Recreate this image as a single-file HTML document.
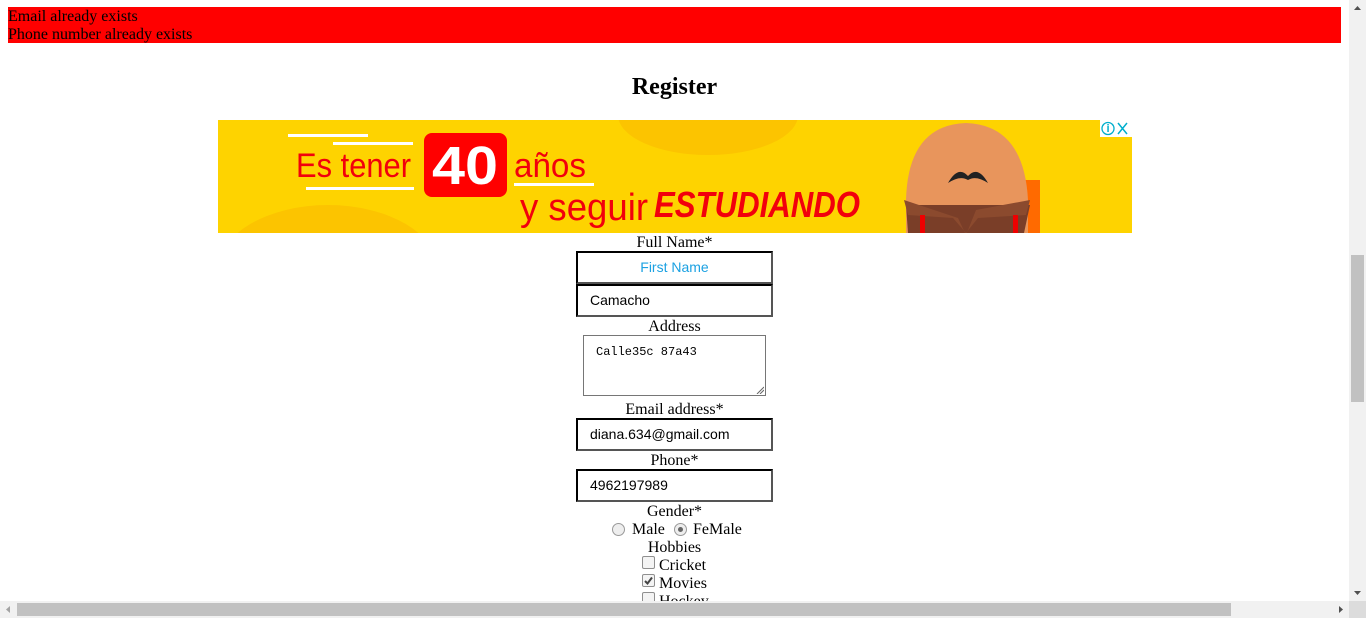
<!DOCTYPE html>
<html><head><meta charset="utf-8">
<style>
html,body{margin:0;padding:0;width:1366px;height:618px;overflow:hidden;background:#fff;font-family:"Liberation Serif",serif;font-size:16px;color:#000;}
.a{position:absolute;}
.lbl{position:absolute;left:0;width:1349px;text-align:center;line-height:18px;}
.inp{position:absolute;left:576px;width:197px;height:33px;border:2px solid;border-color:#000 #555 #555 #000;font-family:"Liberation Sans",sans-serif;font-size:14px;line-height:29px;padding-left:12px;box-sizing:border-box;}
.cb{position:absolute;width:11px;height:11px;border:1px solid #8f8f8f;border-radius:2px;background:#f4f4f4;}
.rd{position:absolute;width:11px;height:11px;border:1px solid #999;border-radius:50%;background:#eee;}
</style></head><body>
<div class="a" style="left:8px;top:7px;width:1333px;height:36px;background:#f00;"><div style="position:absolute;top:1px;line-height:18px;">Email already exists<br>Phone number already exists</div></div>
<div class="lbl" style="top:73px;font-size:24px;font-weight:bold;line-height:28px;">Register</div>

<svg class="a" style="left:218px;top:120px" width="914" height="113" viewBox="0 0 914 113">
<rect width="914" height="113" fill="#fed300"/>
<ellipse cx="490" cy="-5" rx="90" ry="40" fill="#fcc400"/>
<ellipse cx="110" cy="150" rx="110" ry="65" fill="#fcc400"/>
<rect x="70" y="14" width="80" height="3" fill="#fff"/>
<rect x="115" y="22" width="80" height="3" fill="#fff"/>
<rect x="88" y="67" width="108" height="3" fill="#fff"/>
<rect x="296" y="63" width="80" height="3" fill="#fff"/>
<text x="78" y="57" font-family="Liberation Sans,sans-serif" font-size="34" fill="#f2000c" textLength="115" lengthAdjust="spacingAndGlyphs" transform="translate(0,0)">Es tener</text>
<rect x="206" y="13" width="83" height="64" rx="8" fill="#f00"/>
<text x="214" y="64" font-family="Liberation Sans,sans-serif" font-weight="bold" font-size="54" fill="#fff" textLength="66" lengthAdjust="spacingAndGlyphs">40</text>
<text x="296" y="57" font-family="Liberation Sans,sans-serif" font-size="34" fill="#f2000c" textLength="72" lengthAdjust="spacingAndGlyphs">años</text>
<text x="302" y="100" font-family="Liberation Sans,sans-serif" font-size="38" fill="#f2000c" textLength="128" lengthAdjust="spacingAndGlyphs">y seguir</text>
<text x="436" y="97" font-family="Liberation Sans,sans-serif" font-weight="bold" font-style="italic" font-size="36" fill="#f2000c" textLength="206" lengthAdjust="spacingAndGlyphs">ESTUDIANDO</text>
<rect x="800" y="60" width="22" height="53" fill="#ff6a00"/>
<path d="M688 113 L688 80 Q690 5 748 3 Q806 5 810 80 L810 113Z" fill="#e8955c"/>
<path d="M688 85 L812 85 L806 113 L690 113Z" fill="#7a3e28"/>
<path d="M686 80 L740 98 L748 115 L758 90 L812 80 L808 95 L760 98 L748 113 L735 98 L690 95Z" fill="#8b4a2e"/>
<rect x="702" y="95" width="5" height="18" fill="#e00"/>
<rect x="795" y="95" width="5" height="18" fill="#e00"/>
<path d="M730 63 Q740 45 750 56 Q760 45 770 63 Q758 55 750 60 Q742 55 730 63Z" fill="#222"/>
<rect x="882" y="0" width="32" height="17" fill="#fff"/>
<circle cx="890" cy="8.5" r="6" fill="none" stroke="#00aecd" stroke-width="1.3"/>
<rect x="889.3" y="6" width="1.5" height="6" fill="#00aecd"/><rect x="889.3" y="4" width="1.5" height="1.5" fill="#00aecd"/>
<path d="M900 3 L909 14 M909 3 L900 14" stroke="#00aecd" stroke-width="1.5"/>
</svg>

<div class="lbl" style="top:234px;">Full Name*</div>
<div class="inp" style="top:251px;color:#1ba1e2;text-align:center;padding-left:0;">First Name</div>
<div class="inp" style="top:284px;">Camacho</div>
<div class="lbl" style="top:318px;">Address</div>
<div class="a" style="left:583px;top:335px;width:181px;height:59px;border:1px solid #767676;font-family:'Liberation Mono','DejaVu Sans Mono',monospace;font-size:12px;padding:0;"><div style="position:absolute;left:12px;top:9px;">Calle35c 87a43</div>
<svg class="a" style="right:1px;bottom:1px" width="8" height="8"><path d="M1 8 L8 1 M4 8 L8 4" stroke="#666" stroke-width="1"/></svg></div>
<div class="lbl" style="top:401px;">Email address*</div>
<div class="inp" style="top:418px;">diana.634@gmail.com</div>
<div class="lbl" style="top:452px;">Phone*</div>
<div class="inp" style="top:469px;">4962197989</div>
<div class="lbl" style="top:503px;">Gender*</div>
<div class="rd" style="left:612px;top:523px;"></div>
<div class="a" style="left:632px;top:521px;line-height:18px;">Male</div>
<div class="rd" style="left:674px;top:523px;"><div style="position:absolute;left:3px;top:3px;width:5px;height:5px;border-radius:50%;background:#666;"></div></div>
<div class="a" style="left:693px;top:521px;line-height:18px;">FeMale</div>
<div class="lbl" style="top:539px;">Hobbies</div>
<div class="cb" style="left:642px;top:556px;"></div>
<div class="a" style="left:659px;top:557px;line-height:18px;">Cricket</div>
<div class="cb" style="left:642px;top:574px;"><svg class="a" style="left:1px;top:1px" width="9" height="9"><path d="M1 5 L3.5 7.5 L8 1.5" stroke="#444" stroke-width="2" fill="none"/></svg></div>
<div class="a" style="left:659px;top:575px;line-height:18px;">Movies</div>
<div class="cb" style="left:642px;top:592px;"></div>
<div class="a" style="left:659px;top:593px;line-height:18px;">Hockey</div>

<div class="a" style="left:1349px;top:0;width:17px;height:618px;background:#f1f1f1;"></div>
<div class="a" style="left:1351px;top:255px;width:13px;height:147px;background:#c1c1c1;"></div>
<svg class="a" style="left:1349px;top:0" width="17" height="17"><path d="M5 10 L8.5 6 L12 10Z" fill="#505050"/></svg>
<svg class="a" style="left:1349px;top:584px" width="17" height="17"><path d="M5 7 L8.5 11 L12 7Z" fill="#505050"/></svg>
<div class="a" style="left:0;top:601px;width:1349px;height:17px;background:#f1f1f1;"></div>
<div class="a" style="left:17px;top:603px;width:1214px;height:13px;background:#c1c1c1;"></div>
<svg class="a" style="left:0;top:601px" width="17" height="17"><path d="M10 5 L6 8.5 L10 12Z" fill="#a3a3a3"/></svg>
<svg class="a" style="left:1332px;top:601px" width="17" height="17"><path d="M7 5 L11 8.5 L7 12Z" fill="#505050"/></svg>
<div class="a" style="left:1349px;top:601px;width:17px;height:17px;background:#dcdcdc;"></div>
</body></html>
